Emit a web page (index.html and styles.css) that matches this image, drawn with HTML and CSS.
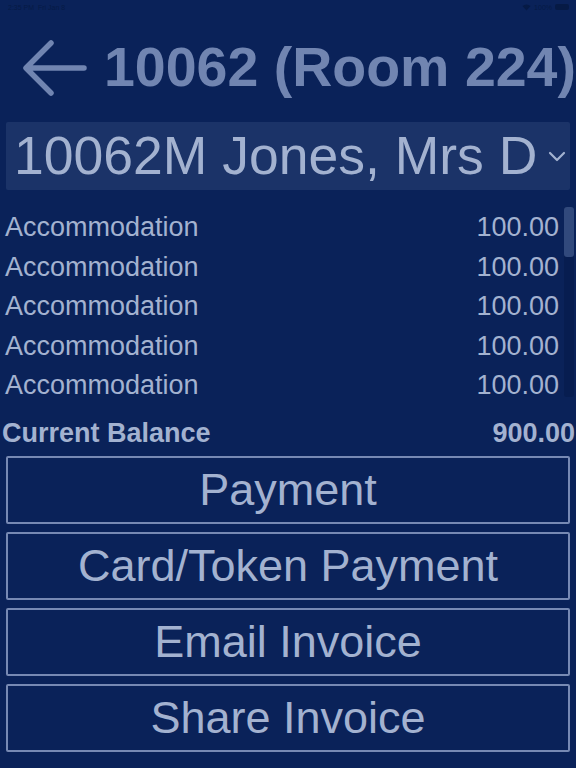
FILE: index.html
```html
<!DOCTYPE html>
<html lang="en">
<head>
    <meta charset="UTF-8">
    <meta name="viewport" content="width=device-width, initial-scale=1.0">
    <title>Folio 10062</title>
    <link rel="stylesheet" href="styles.css">
</head>
<body>
    <!-- Status bar -->
    <div class="status-bar">
        <span class="status-time">2:35 PM&nbsp;&nbsp;Fri Jan 8</span>
        <span class="status-right">
            <svg width="9" height="7" viewBox="0 0 18 14"><path d="M9 13 L1 4 A12 12 0 0 1 17 4 Z" fill="#061a45"/></svg>
            <span>100%</span>
            <span class="battery"></span>
        </span>
    </div>

    <!-- Header -->
    <div class="header">
        <svg class="back-arrow" width="66" height="58" viewBox="0 0 66 58">
            <path d="M63 29 H6 M30 4 L5 29 L30 54" fill="none" stroke="#7185b1" stroke-width="5.5" stroke-linecap="round" stroke-linejoin="round"/>
        </svg>
        <h1 class="title">10062 (Room 224)</h1>
    </div>

    <!-- Guest picker -->
    <div class="guest-select">
        <span class="guest-name">10062M Jones, Mrs D</span>
        <svg class="chevron" width="18" height="11" viewBox="0 0 18 11">
            <path d="M2 2 L9 9 L16 2" fill="none" stroke="#a3b2d0" stroke-width="2.2" stroke-linecap="round" stroke-linejoin="round"/>
        </svg>
    </div>

    <!-- Charges -->
    <div class="charges">
        <div class="charge-row"><span>Accommodation</span><span>100.00</span></div>
        <div class="charge-row"><span>Accommodation</span><span>100.00</span></div>
        <div class="charge-row"><span>Accommodation</span><span>100.00</span></div>
        <div class="charge-row"><span>Accommodation</span><span>100.00</span></div>
        <div class="charge-row"><span>Accommodation</span><span>100.00</span></div>
        <div class="scroll-track"><div class="scroll-thumb"></div></div>
    </div>

    <div class="balance-row">
        <span>Current Balance</span>
        <span>900.00</span>
    </div>

    <!-- Actions -->
    <div class="actions">
        <button class="action-btn">Payment</button>
        <button class="action-btn">Card/Token Payment</button>
        <button class="action-btn">Email Invoice</button>
        <button class="action-btn">Share Invoice</button>
    </div>
</body>
</html>
```

FILE: styles.css
```css
body {
    margin: 0;
    width: 576px;
    height: 768px;
    overflow: hidden;
    background: #0a2259;
    font-family: "Liberation Sans", Arial, sans-serif;
    color: #a3b2d0;
}

/* Status bar */
.status-bar {
    height: 14px;
    display: flex;
    justify-content: space-between;
    align-items: center;
    padding: 0 7px 0 8px;
    font-size: 7px;
    color: #061a45;
}
.status-right {
    display: flex;
    align-items: center;
    gap: 3px;
}
.battery {
    width: 14px;
    height: 6px;
    border-radius: 2px;
    background: #061a45;
}

/* Header */
.header {
    height: 108px;
    display: flex;
    align-items: center;
    padding-left: 21px;
    gap: 17px;
}
.back-arrow {
    flex-shrink: 0;
}
.title {
    margin: 0;
    font-size: 55.5px;
    line-height: 1;
    font-weight: bold;
    color: #7185b1;
    white-space: nowrap;
}

/* Guest picker */
.guest-select {
    margin: 0 6px;
    height: 68px;
    background: #1b3368;
    border-radius: 2px;
    display: flex;
    align-items: center;
    justify-content: space-between;
    padding: 0 4px 0 8px;
}
.guest-name {
    font-size: 53.5px;
    line-height: 1;
    white-space: nowrap;
}

/* Charges list */
.charges {
    position: relative;
    margin-top: 18px;
    padding: 0 17px 0 5px;
}
.charge-row {
    height: 39.5px;
    display: flex;
    justify-content: space-between;
    align-items: center;
    font-size: 27px;
}
.scroll-track {
    position: absolute;
    top: -1px;
    right: 2px;
    width: 10px;
    height: 190px;
    border-radius: 3px;
    background: #071d50;
}
.scroll-thumb {
    height: 50px;
    border-radius: 3px;
    background: #31497c;
}

.balance-row {
    margin-top: 14px;
    display: flex;
    justify-content: space-between;
    padding: 0 1px 0 2px;
    font-size: 27px;
    line-height: 27px;
    font-weight: bold;
}

/* Action buttons */
.actions {
    margin: 9px 6px 0;
    display: flex;
    flex-direction: column;
    gap: 8px;
}
.action-btn {
    height: 68px;
    border: 2px solid #7789b3;
    border-radius: 2px;
    background: transparent;
    color: #a3b2d0;
    font-family: "Liberation Sans", Arial, sans-serif;
    font-size: 45px;
    padding: 0;
}
```
